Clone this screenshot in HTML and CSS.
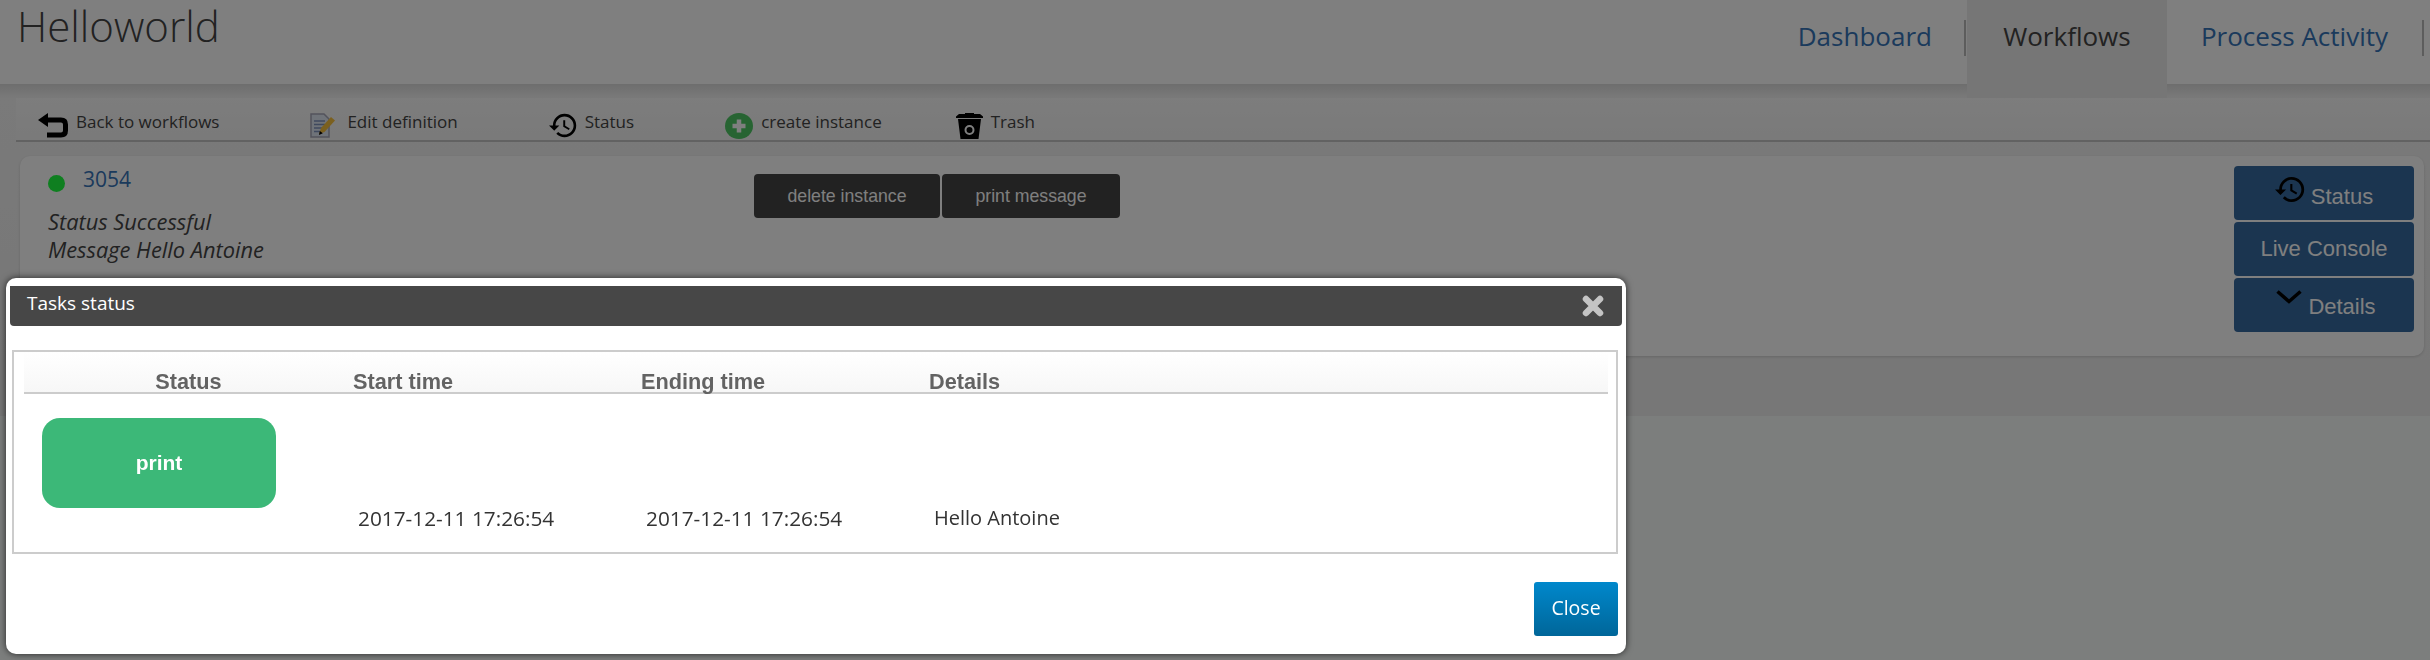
FILE: index.html
```html
<!DOCTYPE html>
<html lang="en">
<head>
  <meta charset="UTF-8">
  <title>Helloworld</title>
  <link rel="stylesheet" href="styles.css">
</head>
<body>

<svg class="defs" width="0" height="0">
  <symbol id="icon-history" viewBox="1 2.6 21.6 18.8">
    <path d="M13 3a9 9 0 0 0-9 9H1l3.89 3.89.07.14L9 12H6c0-3.87 3.13-7 7-7s7 3.13 7 7-3.13 7-7 7c-1.93 0-3.68-.79-4.94-2.06l-1.42 1.42A8.954 8.954 0 0 0 13 21a9 9 0 0 0 0-18zm-1 5v5l4.28 2.54.72-1.21-3.5-2.08V8H12z"/>
  </symbol>
</svg>

<header class="topbar">
  <h1 class="app-title">Helloworld</h1>
  <nav class="tabs">
    <a class="tab tab-dashboard">Dashboard</a>
    <span class="tab-sep"></span>
    <a class="tab tab-active">Workflows</a>
    <a class="tab tab-process">Process Activity</a>
    <span class="tab-sep"></span>
  </nav>
</header>

<div class="workspace">
  <div class="toolbar">
    <a class="tool">
      <svg class="tool-icon" width="30" height="25" viewBox="0 0 30 25">
        <path d="M0 7 10 0v14z"/>
        <path d="M8 7h15q4.500 0 4.500 4.500v6q0 4.500-4.500 4.500H9" fill="none" stroke="#000" stroke-width="5"/>
      </svg>
      Back to workflows
    </a>
    <a class="tool tool-edit">
      <svg class="tool-icon" width="26" height="25" viewBox="0 0 26 25">
        <path d="M1 1h13l5 5v18H1z" fill="#dfe6f2" stroke="#a6a6b8" stroke-width="1.500"/>
        <path d="M4 8h11M4 11.500h11M4 15h8M4 18.500h7" stroke="#7f93bd" stroke-width="1.500"/>
        <path d="M9 21l2-6L21 4l4 3.500L14.500 19z" fill="#f7c03f"/>
        <path d="M9 22l.8-4 3 2.200z" fill="#000"/>
      </svg>
      Edit definition
    </a>
    <a class="tool">
      <svg class="tool-icon" width="28" height="25"><use href="#icon-history"/></svg>
      Status
    </a>
    <a class="tool">
      <svg class="tool-icon" width="28" height="26" viewBox="0 0 28 26">
        <ellipse cx="14" cy="13" rx="14" ry="13" fill="#4ec864"/>
        <path d="M14 6.500v13M7.500 13h13" stroke="#fff" stroke-width="4.500"/>
      </svg>
      create instance
    </a>
    <a class="tool tool-trash">
      <svg class="tool-icon" width="27" height="26" viewBox="0 0 27 26">
        <path d="M0 3.500 3 1h6V0h9v1h6l3 2.500V5H0z"/>
        <path d="M2 6h23l-2.500 20h-18z"/>
        <circle cx="13.500" cy="17" r="4" fill="none" stroke="#fff" stroke-width="2"/>
      </svg>
      Trash
    </a>
  </div>

  <section class="instance-card">
    <div class="instance-info">
      <div class="instance-id"><span class="status-dot"></span><a class="instance-link">3054</a></div>
      <p class="instance-line">Status Successful</p>
      <p class="instance-line">Message Hello Antoine</p>
    </div>
    <div class="instance-actions">
      <button class="dark-btn dark-btn-delete">delete instance</button>
      <button class="dark-btn dark-btn-print">print message</button>
    </div>
    <div class="side-actions">
      <button class="side-btn">
        <svg class="side-icon" width="30" height="29"><use href="#icon-history"/></svg>
        <span class="side-label">Status</span>
      </button>
      <button class="side-btn">Live Console</button>
      <button class="side-btn">
        <svg class="side-chevron" width="26" height="14" viewBox="0 0 26 14">
          <path d="M1.500 1.500 13 11.500 24.500 1.500" fill="none" stroke="#000" stroke-width="3.500"/>
        </svg>
        <span class="side-label side-label-details">Details</span>
      </button>
    </div>
  </section>
</div>

<div class="overlay"></div>

<div class="modal">
  <div class="modal-head">
    <span>Tasks status</span>
    <svg width="22" height="22" viewBox="0 0 22 22">
      <path d="M4 4 18 18M18 4 4 18" stroke="#c4c4c4" stroke-width="6.500" stroke-linecap="round"/>
    </svg>
  </div>
  <div class="tasks-box">
    <table class="tasks">
      <thead>
        <tr>
          <th class="col-status">Status</th>
          <th class="col-time">Start time</th>
          <th class="col-time">Ending time</th>
          <th>Details</th>
        </tr>
      </thead>
      <tbody>
        <tr>
          <td class="cell-task"><div class="task-pill">print</div></td>
          <td class="cell-time">2017-12-11 17:26:54</td>
          <td class="cell-time">2017-12-11 17:26:54</td>
          <td>Hello Antoine</td>
        </tr>
      </tbody>
    </table>
  </div>
  <div class="modal-foot">
    <button class="close-btn">Close</button>
  </div>
</div>

</body>
</html>
```

FILE: styles.css
```css
* {
  box-sizing: border-box;
}
html, body {
  height: 660px;
  overflow: hidden;
}
body {
  background: #f8fcfa;
  color: #444;
  font-family: "Open Sans", sans-serif;
  margin: 0;
}
p {
  margin: 0;
}
button {
  border: 0;
  font-family: "Liberation Sans", sans-serif;
}
.defs {
  display: block;
}

/* top bar */
.topbar {
  background: linear-gradient(#fff, #fefefe);
  display: flex;
  height: 84px;
  justify-content: space-between;
  position: relative;
  z-index: 1;
}
.app-title {
  font-size: 42px;
  font-weight: 300;
  line-height: 56px;
  margin: -2px 0 0 17px;
}
.tabs {
  display: flex;
  height: 98px;
  padding-right: 6px;
}
.tab {
  color: #3674b8;
  font-size: 26px;
  line-height: 36px;
  padding-top: 18px;
}
.tab-dashboard {
  padding-right: 32px;
}
.tab-active {
  background: #ececec;
  color: #444;
  margin-left: 1px;
  text-align: center;
  width: 200px;
}
.tab-process {
  padding: 18px 34px 0;
}
.tab-sep {
  background: #bbb;
  height: 36px;
  margin-top: 20px;
  width: 2px;
}

/* page below the top bar */
.workspace {
  background: linear-gradient(#dcdcdc, #f4f4f4 14px, #eee);
  height: 332px;
  padding: 14px 0 0 16px;
}
.toolbar {
  align-items: flex-start;
  background: linear-gradient(#fafafa, #f4f4f4);
  border-bottom: 2px solid #c4c4c4;
  display: flex;
  gap: 91px;
  height: 44px;
  padding: 14px 0 0 22px;
}
.tool {
  align-items: flex-start;
  display: flex;
  font-size: 17px;
  gap: 8px;
  line-height: 20px;
}
.tool-icon {
  flex: none;
  margin-top: 1px;
}
.tool-edit {
  gap: 11px;
}
.tool-trash {
  margin-left: -17px;
}
.instance-card {
  background: #fff;
  border-radius: 10px;
  box-shadow: 0 1px 3px rgba(0, 0, 0, .15);
  display: grid;
  grid-template-columns: 706px 1fr 180px;
  height: 200px;
  margin: 14px 6px 0 4px;
  padding: 10px 10px 0 28px;
}
.instance-id {
  align-items: center;
  display: flex;
  gap: 18px;
  height: 28px;
  margin-bottom: 14px;
}
.status-dot {
  background: #1eff40;
  border-radius: 50%;
  height: 17px;
  margin-top: 7px;
  width: 17px;
}
.instance-link {
  color: #3674b8;
  font-size: 21px;
  margin-top: -3px;
}
.instance-line {
  font-size: 21.800px;
  font-style: italic;
  line-height: 28px;
}
.instance-actions {
  display: flex;
  gap: 2px;
  padding-top: 8px;
}
.dark-btn {
  background: #444;
  border-radius: 4px;
  color: #fff;
  font-size: 17.700px;
  height: 44px;
}
.dark-btn-delete {
  width: 186px;
}
.dark-btn-print {
  width: 178px;
}
.side-actions {
  display: flex;
  flex-direction: column;
  gap: 2px;
}
.side-btn {
  align-items: center;
  background: #366aa0;
  border-radius: 4px;
  color: #fff;
  display: flex;
  font-size: 22px;
  gap: 6px;
  height: 54px;
  justify-content: center;
}
.side-label {
  padding-top: 8px;
}
.side-label-details {
  padding-top: 4px;
}
.side-icon {
  margin: -8px 0 0 0;
}
.side-chevron {
  margin: -16px 0 0 4px;
}

/* dim layer and dialog */
.overlay {
  background: rgba(0, 0, 0, .5);
  inset: 0;
  position: fixed;
  z-index: 2;
}
.modal {
  background: #fff;
  border-radius: 10px;
  box-shadow: 0 0 7px rgba(0, 0, 0, .7);
  height: 376px;
  left: 6px;
  padding: 8px 4px 0;
  position: absolute;
  top: 278px;
  width: 1620px;
  z-index: 3;
}
.modal-head {
  align-items: center;
  background: #474747;
  border-radius: 0 0 4px 4px;
  color: #fff;
  display: flex;
  font-size: 19px;
  height: 40px;
  justify-content: space-between;
  padding: 0 18px 6px 17px;
}
.modal-head svg {
  margin-top: 6px;
}
.tasks-box {
  border: 2px solid #ccc;
  height: 204px;
  margin: 24px 4px 0 2px;
  padding: 0 8px 0 10px;
}
.tasks {
  border-collapse: collapse;
  table-layout: fixed;
  width: 100%;
}
.tasks th {
  background: linear-gradient(#fff, #f7f7f7);
  border-bottom: 2px solid #ccc;
  color: #636363;
  font-family: "Liberation Sans", sans-serif;
  font-size: 21.700px;
  height: 41px;
  line-height: 20px;
  padding: 15px 0 0;
  text-align: left;
  vertical-align: bottom;
}
.tasks th.col-status {
  text-align: center;
  width: 329px;
}
.tasks th.col-time {
  width: 288px;
}
.tasks td {
  color: #333;
  font-size: 20px;
  height: 159px;
  line-height: 28px;
  padding: 0 0 20px 5px;
  vertical-align: bottom;
}
.tasks td.cell-time {
  font-size: 20.800px;
}
.tasks td.cell-task {
  padding: 24px 0 0 18px;
  vertical-align: top;
}
.task-pill {
  align-items: center;
  background: #3cb878;
  border-radius: 18px;
  color: #fff;
  display: flex;
  font-family: "Liberation Sans", sans-serif;
  font-size: 21px;
  font-weight: bold;
  height: 90px;
  justify-content: center;
  width: 234px;
}
.modal-foot {
  display: flex;
  justify-content: flex-end;
  margin-top: 28px;
  padding-right: 4px;
}
.close-btn {
  background: linear-gradient(#0088cc, #006699);
  border-radius: 3px;
  color: #fff;
  font-family: "Open Sans", sans-serif;
  font-size: 19.500px;
  height: 54px;
  padding-bottom: 5px;
  width: 84px;
}
```
